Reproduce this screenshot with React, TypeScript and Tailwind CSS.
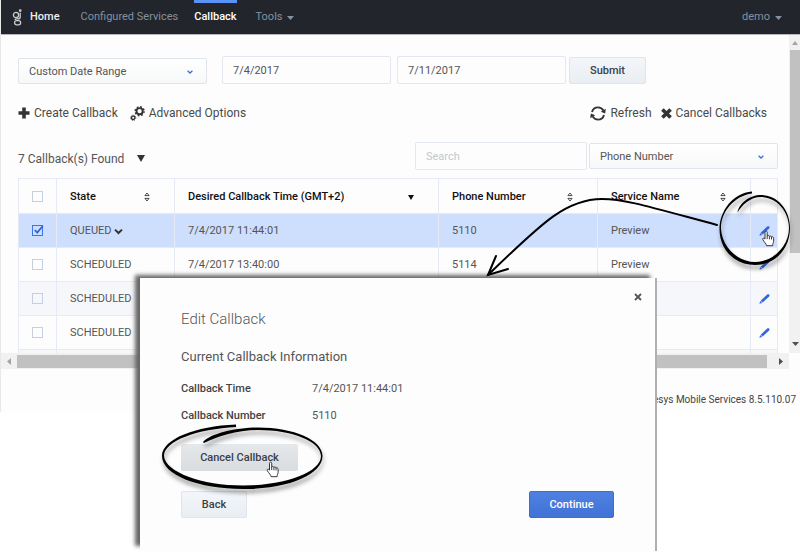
import clsx from "clsx"
import type { ReactNode } from "react"

interface Callback {
  state: string
  time: string
  phone: string
  service: string
  queued?: boolean
}

const callbacks: Callback[] = [
  { state: "QUEUED", time: "7/4/2017 11:44:01", phone: "5110", service: "Preview", queued: true },
  { state: "SCHEDULED", time: "7/4/2017 13:40:00", phone: "5114", service: "Preview" },
  { state: "SCHEDULED", time: "", phone: "", service: "" },
  { state: "SCHEDULED", time: "", phone: "", service: "" },
  { state: "", time: "", phone: "", service: "" },
]

const greyButton =
  "rounded-xs border border-[#dfe5ec] bg-gradient-to-b from-[#f3f6fa] to-[#e9eef3] h-[27px] pt-px font-medium text-[#3a4048]"

const cell = "border border-[#e6eaf5] pl-[13px] pt-[2px]"

function Logo() {
  return (
    <svg className="w-[11px] h-[17px]" viewBox="0 0 11 17" fill="none" stroke="#c9cdd1" strokeWidth="1.3">
      <circle cx="4" cy="6" r="2.6" />
      <path d="M8.2 3.8V8.2C8.2 9.6 7.2 9.9 5.6 9.9H4.4C3.4 9.9 3 10.3 3 11" />
      <rect x="2.6" y="11.6" width="6" height="4.2" rx="2" />
      <circle cx="8.2" cy="1.6" r="0.8" />
    </svg>
  )
}

function Caret() {
  return (
    <svg className="w-[7px] h-[4px]" viewBox="0 0 7 4">
      <path d="M0 0H7L3.5 4Z" fill="currentColor" />
    </svg>
  )
}

function Chevron() {
  return (
    <svg className="w-[6px] h-[4px] absolute right-[14px] top-[12px] pointer-events-none" viewBox="0 0 6 4">
      <path d="M0.6 0.7L3 3L5.4 0.7" fill="none" stroke="#3f6fd8" strokeWidth="1.3" />
    </svg>
  )
}

function Gears() {
  return (
    <svg className="w-[15px] h-[15px]" viewBox="0 0 15 15" fill="none" stroke="#333">
      <circle cx="9.6" cy="5.2" r="3.1" strokeWidth="1.9" />
      <circle cx="9.6" cy="5.2" r="4.5" strokeWidth="1.4" strokeDasharray="1.8 1.734" />
      <circle cx="3.2" cy="11.8" r="1.7" strokeWidth="1.3" />
      <circle cx="3.2" cy="11.8" r="2.6" strokeWidth="0.9" strokeDasharray="1.1 0.942" />
    </svg>
  )
}

function RefreshIcon() {
  return (
    <svg className="w-[16px] h-[15px]" viewBox="0 0 16 15" fill="none" stroke="#333" strokeWidth="1.9">
      <path d="M2 6C2.8 3.2 5 1.4 8 1.4C10.4 1.4 12.3 2.6 13.4 4.6" />
      <path d="M14 9C13.2 11.8 11 13.6 8 13.6C5.6 13.6 3.7 12.4 2.6 10.4" />
      <path d="M15.8 2.8L15.2 7.6L10.8 5.8Z" fill="#333" stroke="none" />
      <path d="M0.2 12.2L0.8 7.4L5.2 9.2Z" fill="#333" stroke="none" />
    </svg>
  )
}

function SortIcon() {
  return (
    <svg className="w-[6px] h-[10px]" viewBox="0 0 6 10" fill="none" stroke="#222" strokeWidth="0.8">
      <path d="M0.9 3.6L3 1L5.1 3.6Z" />
      <path d="M0.9 6.4L3 9L5.1 6.4Z" />
    </svg>
  )
}

function Pencil() {
  return (
    <svg className="w-[11px] h-[10px]" viewBox="0 0 11 10" fill="#2f66dc">
      <path d="M8.2 0.5C8.8 0 9.5 0 10.1 0.6C10.6 1.2 10.6 1.8 10.1 2.4L3.6 8.6L1.7 6.7Z" />
      <path d="M1.3 7.1L3.1 8.9L0.4 9.8Z" />
    </svg>
  )
}

function Hand() {
  return (
    <path
      d="M3 8.6V1.8C3 0.2 5.2 0.2 5.2 1.8V5.4C5.5 4.7 7.2 4.8 7.4 5.9C7.8 5.2 9.3 5.4 9.5 6.5C10.2 5.9 11.6 6.3 11.6 7.7V10.8C11.6 12.4 10.6 13 10.6 15.2H4.6C4.4 13.4 2.6 12 0.8 9.2C0.2 7.9 1.6 6.9 3 8.6ZM5.2 5.4V8.6M7.4 6V8.8M9.5 6.6V9"
      fill="#fff"
      stroke="#222"
      strokeWidth="0.9"
      strokeLinejoin="round"
    />
  )
}

function Select({ label, className }: { label: string; className?: string }) {
  return (
    <div className={clsx("relative", className)}>
      <select
        aria-label={label}
        className="appearance-none block w-full h-[26px] pl-[10px] pt-[2px] rounded-xs border border-[#e0e5ec] bg-gradient-to-b from-white to-[#f7f8f9] text-[#555]"
      >
        <option>{label}</option>
      </select>
      <Chevron />
    </div>
  )
}

function TextBox({ label, value, className }: { label: string; value?: string; className: string }) {
  return (
    <input
      type="text"
      aria-label={label}
      defaultValue={value}
      placeholder={label}
      className={clsx(
        "h-[28px] px-[10px] rounded-xs border border-[#e3e8ef] bg-[#fdfdfd] text-[#555] placeholder:text-[#c4c8ce]",
        className,
      )}
    />
  )
}

function CheckBox({ label, checked }: { label: string; checked?: boolean }) {
  return (
    <label className="relative block w-[11px] h-[11px] mx-auto">
      <input
        type="checkbox"
        aria-label={label}
        defaultChecked={checked}
        className="appearance-none block w-[11px] h-[11px] border border-[#c5d0de] checked:border-[#3f74e0]"
      />
      {checked && (
        <svg className="absolute left-0 top-0 w-[12px] h-[11px]" viewBox="0 0 12 11">
          <path d="M2.8 5L5.2 7.6L10.8 1" fill="none" stroke="#2f66dc" strokeWidth="1.8" />
        </svg>
      )}
    </label>
  )
}

function HeadCell({ children, icon, className }: { children: ReactNode; icon: ReactNode; className: string }) {
  return (
    <th className={clsx(cell, "pr-[24px] font-medium text-[#111]", className)}>
      <div className="flex items-center justify-between">
        <span>{children}</span>
        {icon}
      </div>
    </th>
  )
}

function NavBar() {
  return (
    <header className="h-[34px] bg-[#22252b] text-[#8491a0] flex items-center pl-[11px] pr-[18px]">
      <Logo />
      <a href="#home" className="ml-[7px] pt-px font-medium text-[#eceef0]">
        Home
      </a>
      <a href="#services" className="ml-[21px] pt-px">
        Configured Services
      </a>
      <a
        href="#callback"
        className="ml-[16px] h-full flex items-center border-t-[3px] border-[#5a92f5] pb-[2px] font-medium text-white"
      >
        Callback
      </a>
      <button className="ml-[19px] pt-px flex items-center gap-[5px]">
        Tools <Caret />
      </button>
      <button className="ml-auto pt-px flex items-center gap-[5px]">
        demo <Caret />
      </button>
    </header>
  )
}

function CallbackTable() {
  return (
    <table className="w-full table-fixed border-collapse text-left text-[#555]">
      <thead>
        <tr className="h-[35px]">
          <th className="border border-[#e6eaf5] w-[38px]">
            <CheckBox label="Select all" />
          </th>
          <HeadCell className="w-[118px]" icon={<SortIcon />}>
            State
          </HeadCell>
          <HeadCell
            className="w-[264px]"
            icon={
              <svg className="w-[6px] h-[5px]" viewBox="0 0 6 5">
                <path d="M0 0H6L3 5Z" fill="#111" />
              </svg>
            }
          >
            Desired Callback Time (GMT+2)
          </HeadCell>
          <HeadCell className="w-[159px]" icon={<SortIcon />}>
            Phone Number
          </HeadCell>
          <HeadCell className="w-[153px]" icon={<SortIcon />}>
            Service Name
          </HeadCell>
          <th className="border border-[#e6eaf5]" />
        </tr>
      </thead>
      <tbody>
        {callbacks.map((row, i) => (
          <tr
            key={i}
            className={clsx("h-[34px]", row.queued ? "bg-[#cedefd]" : i % 2 === 0 && "bg-[#f5f7fb]")}
          >
            <td className="border border-[#e6eaf5]">
              <CheckBox label={`Select row ${i + 1}`} checked={row.queued} />
            </td>
            <td className={cell}>
              <span className="flex items-center gap-[2px]">
                {row.state}
                {row.queued && (
                  <svg className="w-[9px] h-[8px]" viewBox="0 0 9 8">
                    <path d="M1 1.6L4.5 5L8 1.6" fill="none" stroke="#333" strokeWidth="2" />
                  </svg>
                )}
              </span>
            </td>
            <td className={cell}>{row.time}</td>
            <td className={cell}>{row.phone}</td>
            <td className={cell}>{row.service}</td>
            <td className="border border-[#e6eaf5]">
              <button aria-label="Edit callback" className="block mx-auto">
                <Pencil />
              </button>
            </td>
          </tr>
        ))}
      </tbody>
    </table>
  )
}

function EditDialog() {
  return (
    <div
      role="dialog"
      aria-label="Edit Callback"
      className="absolute left-[140px] top-[278px] w-[517px] bg-[#fdfdfd] border-r-2 border-[#b0b0b0] pl-[41px] pr-[41px] pb-[33px] text-[#555] shadow-[-6px_-4px_4px_-1px_#666]"
    >
      <button aria-label="Close" className="absolute right-[13px] top-[15px]">
        <svg className="w-[8px] h-[8px]" viewBox="0 0 8 8">
          <path d="M1 1L7 7M7 1L1 7" stroke="#555" strokeWidth="1.8" />
        </svg>
      </button>
      <h2 className="pt-[31px] text-[15px] leading-[20px] font-light">Edit Callback</h2>
      <h3 className="mt-[18px] text-[13px] leading-[20px]">Current Callback Information</h3>
      <dl className="mt-[12px] grid grid-cols-[131px_1fr] gap-y-[7px] leading-[20px]">
        <dt className="font-medium text-[#444]">Callback Time</dt>
        <dd>7/4/2017 11:44:01</dd>
        <dt className="font-medium text-[#444]">Callback Number</dt>
        <dd>5110</dd>
      </dl>
      <button className="mt-[18px] pt-px block w-[117px] h-[27px] rounded-xs bg-gradient-to-b from-[#e6e9ec] to-[#d9dcdf] font-medium text-[#3a4048]">
        Cancel Callback
      </button>
      <div className="mt-[20px] flex justify-between">
        <button className={clsx(greyButton, "w-[66px]")}>Back</button>
        <button className="w-[85px] h-[27px] pt-px rounded-xs border border-[#3c6dd0] bg-gradient-to-b from-[#4f81e2] to-[#4173d6] font-medium text-white">
          Continue
        </button>
      </div>
    </div>
  )
}

// Hand-drawn rings, the arrow between them and the two pointers
function Annotations() {
  return (
    <svg
      className="absolute left-0 top-0 w-[800px] h-[555px] pointer-events-none"
      viewBox="0 0 800 555"
      aria-hidden="true"
    >
      <defs>
        <filter id="soft" x="-20%" y="-20%" width="140%" height="150%">
          <feDropShadow dx="1" dy="4" stdDeviation="2" floodColor="#000" floodOpacity="0.4" />
        </filter>
      </defs>
      <g fill="none" stroke="#000" strokeWidth="2" strokeLinecap="round">
        <path d="M717 225C650 207 625 199 602 199C565 199 540 225 488 275" />
        <path d="M496 256L488 275L508 269" />
      </g>
      <g filter="url(#soft)">
        <path d="M752 191.5C733 193 719.5 211 719.5 229C719.5 250 735 265 755 265C775 265 790 249 790 228C790 209 777 195 761 195C750 195 739 203 737.5 212.5C742 205 750 197 761 197C776 197 789 211 789 228C789 246 773 262 755 262C738 262 722 247 721 229C720.5 212 734 196 752 193.5Z" />
        <path d="M236 424.5C196 426 162 439 162 456C162 475 199 489 243 489C290 489 322.5 474 322.5 456C322.5 440 294 427.5 258 427.5C234 427.5 210 434 203 442L204 443C216 437 236 430 258 430C292 430 320.5 441 321 456C321 472 286 485.5 243 485.5C202 485.5 165 472 164 456C164 441 197 429 236 427Z" />
      </g>
      <g transform="translate(762 230.5)">
        <Hand />
      </g>
      <g transform="translate(266.5 461.5)">
        <Hand />
      </g>
    </svg>
  )
}

export default function App() {
  return (
    <div className="relative min-h-[555px] overflow-hidden bg-white font-['Roboto',sans-serif] text-[11px]">
      <div className="border-l border-[#e8e8e8] bg-[#fdfdfd]">
        <NavBar />
        <div className="flex h-[319px] border-t border-[#b5b7ba]">
          <main className="flex-1 min-w-0 overflow-hidden pl-[17px] pr-[11px] pt-[21px]">
            <div className="flex items-end">
              <Select label="Custom Date Range" className="w-[189px]" />
              <TextBox label="From" value="7/4/2017" className="ml-[15px] w-[169px]" />
              <TextBox label="To" value="7/11/2017" className="ml-[6px] w-[169px]" />
              <button className={clsx(greyButton, "ml-[3px] w-[77px]")}>Submit</button>
            </div>

            <div className="mt-[19px] flex items-center h-[20px] text-[12px] text-[#4a4a4a]">
              <button className="flex items-center gap-[4px]">
                <svg className="w-[12px] h-[12px]" viewBox="0 0 12 12">
                  <path d="M6 0.5V11.5M0.5 6H11.5" stroke="#333" strokeWidth="3.6" />
                </svg>
                Create Callback
              </button>
              <button className="ml-[12px] flex items-center gap-[4px]">
                <Gears />
                Advanced Options
              </button>
              <button className="ml-auto flex items-center gap-[4px]">
                <RefreshIcon />
                Refresh
              </button>
              <button className="ml-[9px] mr-[11px] flex items-center gap-[4px]">
                <svg className="w-[11px] h-[11px]" viewBox="0 0 11 11">
                  <path d="M1.4 1.4L9.6 9.6M9.6 1.4L1.4 9.6" stroke="#333" strokeWidth="3.6" />
                </svg>
                Cancel Callbacks
              </button>
            </div>

            <div className="mt-[19px] mb-[8px] flex items-center">
              <h1 className="pt-[5px] text-[12px] text-[#555]">7 Callback(s) Found</h1>
              <svg className="mt-[5px] ml-[13px] w-[8px] h-[7px]" viewBox="0 0 8 7">
                <path d="M0 0H8L4 7Z" fill="#333" />
              </svg>
              <TextBox label="Search" className="ml-auto w-[172px]" />
              <Select label="Phone Number" className="ml-[2px] w-[189px]" />
            </div>

            <CallbackTable />
          </main>

          {/* Vertical scrollbar */}
          <div className="w-[11px] bg-[#f1f1f1] flex flex-col items-end text-[#505050]">
            <div className="h-[15px] w-[8px] pt-[6px] text-[#a3a3a3]">
              <svg className="w-[6px] h-[4px]" viewBox="0 0 6 4">
                <path d="M0 4H6L3 0Z" fill="currentColor" />
              </svg>
            </div>
            <div className="w-[10px] h-[203px] bg-[#c1c1c1]" />
            <div className="mt-auto h-[11px] w-[8px]">
              <svg className="w-[7px] h-[4px]" viewBox="0 0 7 4">
                <path d="M0 0H7L3.5 4Z" fill="currentColor" />
              </svg>
            </div>
          </div>
        </div>

        {/* Horizontal scrollbar */}
        <div className="mr-[11px] h-[16px] bg-[#f1f1f1] flex items-center px-[6px]">
          <svg className="w-[4px] h-[7px]" viewBox="0 0 4 7">
            <path d="M4 0V7L0 3.5Z" fill="#a3a3a3" />
          </svg>
          <div className="ml-[6px] mr-[12px] flex-1 h-[13px] bg-[#c1c1c1]" />
          <svg className="w-[4px] h-[7px]" viewBox="0 0 4 7">
            <path d="M0 0V7L4 3.5Z" fill="#505050" />
          </svg>
        </div>

        <footer className="h-[43px] pt-[23px] pr-[4px] text-right text-[10px] text-[#444]">
          Genesys Mobile Services 8.5.110.07
        </footer>
      </div>

      <EditDialog />
      <Annotations />
    </div>
  )
}
